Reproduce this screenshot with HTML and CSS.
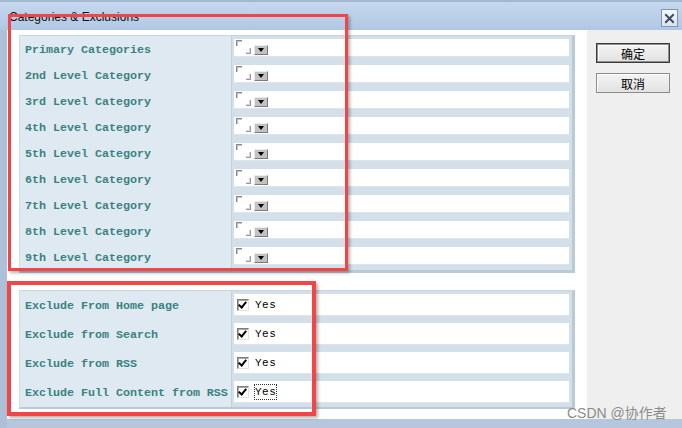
FILE: index.html
```html
<!DOCTYPE html>
<html lang="en">
<head>
    <meta charset="UTF-8">
    <meta name="viewport" content="width=device-width, initial-scale=1.0">
    <title>Categories &amp; Exclusions</title>
    <link rel="stylesheet" href="styles.css">
</head>
<body>
    <div class="window">
        <div class="titlebar">
            <span class="title">Categories &amp; Exclusions</span>
            <span class="close">
                <svg width="17" height="17" viewBox="0 0 17 17">
                    <path d="M4.5 4.5 L12.5 12.5 M12.5 4.5 L4.5 12.5" stroke="#3b4a5e" stroke-width="2.2" stroke-linecap="square"/>
                </svg>
            </span>
        </div>
        <div class="frame">
            <div class="content">
                <!-- 카테고리 -->
                <div class="panel cats">
                    <div class="label">Primary Categories</div>
                    <div class="cell"><div class="box"><span class="img-tl"></span><span class="img-br"></span><span class="drop"></span></div></div>
                    <div class="label">2nd Level Category</div>
                    <div class="cell"><div class="box"><span class="img-tl"></span><span class="img-br"></span><span class="drop"></span></div></div>
                    <div class="label">3rd Level Category</div>
                    <div class="cell"><div class="box"><span class="img-tl"></span><span class="img-br"></span><span class="drop"></span></div></div>
                    <div class="label">4th Level Category</div>
                    <div class="cell"><div class="box"><span class="img-tl"></span><span class="img-br"></span><span class="drop"></span></div></div>
                    <div class="label">5th Level Category</div>
                    <div class="cell"><div class="box"><span class="img-tl"></span><span class="img-br"></span><span class="drop"></span></div></div>
                    <div class="label">6th Level Category</div>
                    <div class="cell"><div class="box"><span class="img-tl"></span><span class="img-br"></span><span class="drop"></span></div></div>
                    <div class="label">7th Level Category</div>
                    <div class="cell"><div class="box"><span class="img-tl"></span><span class="img-br"></span><span class="drop"></span></div></div>
                    <div class="label">8th Level Category</div>
                    <div class="cell"><div class="box"><span class="img-tl"></span><span class="img-br"></span><span class="drop"></span></div></div>
                    <div class="label">9th Level Category</div>
                    <div class="cell"><div class="box"><span class="img-tl"></span><span class="img-br"></span><span class="drop"></span></div></div>
                </div>
                <!-- 제외 옵션 -->
                <div class="panel excl">
                    <div class="label">Exclude From Home page</div>
                    <div class="cell"><div class="box"><span class="check"></span><span class="yes">Yes</span></div></div>
                    <div class="label">Exclude from Search</div>
                    <div class="cell"><div class="box"><span class="check"></span><span class="yes">Yes</span></div></div>
                    <div class="label">Exclude from RSS</div>
                    <div class="cell"><div class="box"><span class="check"></span><span class="yes">Yes</span></div></div>
                    <div class="label">Exclude Full Content from RSS</div>
                    <div class="cell"><div class="box"><span class="check"></span><span class="yes focus">Yes</span></div></div>
                </div>
            </div>
            <div class="side">
                <button class="btn default">确定</button>
                <button class="btn">取消</button>
            </div>
        </div>
        <div class="mark mark1"></div>
        <div class="mark mark2"></div>
        <div class="watermark">CSDN @协作者</div>
    </div>
</body>
</html>
```

FILE: styles.css
```css
body {margin: 0; width: 682px; height: 428px; overflow: hidden; font-family: "Liberation Sans", Arial, sans-serif;}
.window {position: relative; width: 682px; height: 428px; background: #aebfd8; display: flex; flex-direction: column;}

.titlebar {height: 30px; box-sizing: border-box; border-top: 2px solid #a4b8d2; background: linear-gradient(#c6d8ee, #b0c7e4); display: flex; align-items: center; justify-content: space-between; padding: 0 4px 0 9px;}
.title {font-size: 12px; color: #111; margin-top: 2px;}
.close {width: 17px; height: 18px; box-sizing: border-box; border: 1px solid #8196b2; background: linear-gradient(#f4f7fb, #d9e3ef); display: flex; align-items: center; justify-content: center; margin-top: 4px;}

.frame {flex: 1; display: flex; margin-left: 7px; border-bottom: 9px solid #b6c7dd;}
.content {flex: 1; background: #fff; padding: 5px 12px 0 12px;}
.side {width: 95px; background: #efefef; display: flex; flex-direction: column; align-items: flex-start; gap: 10px; padding: 13px 0 0 9px; box-sizing: border-box;}

.panel {display: grid; grid-template-columns: 212px 1fr; border-top: 1px solid #c8d5e0; border-left: 1px solid #d3dde6; border-right: 3px solid #b9c9d6; border-bottom: 3px solid #b9c9d6; background: #d3dfe9;}
.cats {grid-auto-rows: 26px;}
.excl {grid-auto-rows: 29px; margin-top: 17px; border-bottom-width: 2px;}
.label {background: #dfe9f1; border-right: 1px solid #c3cfdb; padding-left: 5px; display: flex; align-items: center; padding-top: 1px; font-family: "Liberation Mono", "Courier New", monospace; font-weight: bold; font-size: 11.67px; color: #3a8281; white-space: nowrap;}
.cell {padding: 3px 3px 0 2px;}
.cats .box {height: 18px;}
.excl .cell {display: flex; flex-direction: column; justify-content: center; padding-top: 0; padding-bottom: 1px;}
.excl .box {height: 22px; align-items: center;}
.box {background: #fff; border-bottom: 1px solid #dde4ea; box-sizing: border-box; display: flex; align-items: flex-start;}

.img-tl {width: 5px; height: 5px; margin: 1px 0 0 2px; border-top: 1px solid #8a8a8a; border-left: 1px solid #8a8a8a; box-shadow: inset 1px 1px #c9c0d8;}
.img-br {width: 4px; height: 5px; margin: 9px 0 0 4px; border-right: 1px solid #9c98a8; border-bottom: 1px solid #9c98a8; box-shadow: inset -1px -1px #d6d2de;}
.drop {position: relative; width: 14px; height: 10px; margin: 6px 0 0 3px; box-sizing: border-box; background: #c2c2c2; border: 1px solid; border-color: #ececec #7a7a7a #7a7a7a #ececec;}
.drop::after {content: ""; position: absolute; left: 3px; top: 2px; border-left: 3px solid transparent; border-right: 3px solid transparent; border-top: 4px solid #000;}

.check {position: relative; width: 12px; height: 12px; margin-left: 3px; box-sizing: border-box; background: #fff; border: 1px solid; border-color: #7c7c7c #e2e2e2 #e2e2e2 #7c7c7c; box-shadow: inset 1px 1px #a8a8a8;}
.check::after {content: ""; position: absolute; left: 2px; top: 0px; width: 3px; height: 6px; border-right: 2px solid #000; border-bottom: 2px solid #000; transform: rotate(40deg);}
.yes {margin-left: 5px; font-family: "Liberation Mono", "Courier New", monospace; font-size: 11px; letter-spacing: 0.5px; color: #000; padding: 1px 0; border: 1px solid transparent;}
.yes.focus {border: 1px dotted #333;}

.btn {width: 74px; height: 20px; padding: 0; font-family: "Noto Sans CJK SC", sans-serif; font-size: 12px; color: #000; background: linear-gradient(#f4f4f4, #e2e2e2); border: 1px solid #8b8b8b; box-shadow: inset 1px 1px #fff;}
.btn.default {border: 1px solid #3c3c3c; box-shadow: inset 0 0 0 1px #8f8f8f, inset 2px 2px #fff;}

.mark {position: absolute; border: 3px solid #f24646; box-shadow: 2px 2px 3px rgba(0, 0, 0, 0.3); box-sizing: border-box;}
.mark1 {left: 8px; top: 14px; width: 340px; height: 257px;}
.mark2 {left: 7px; top: 281px; width: 309px; height: 135px; border-width: 4px;}

.watermark {position: absolute; left: 567px; top: 402px; font-family: "Liberation Sans", "Noto Sans CJK SC", sans-serif; font-size: 14px; color: #8c8c8c;}
```
